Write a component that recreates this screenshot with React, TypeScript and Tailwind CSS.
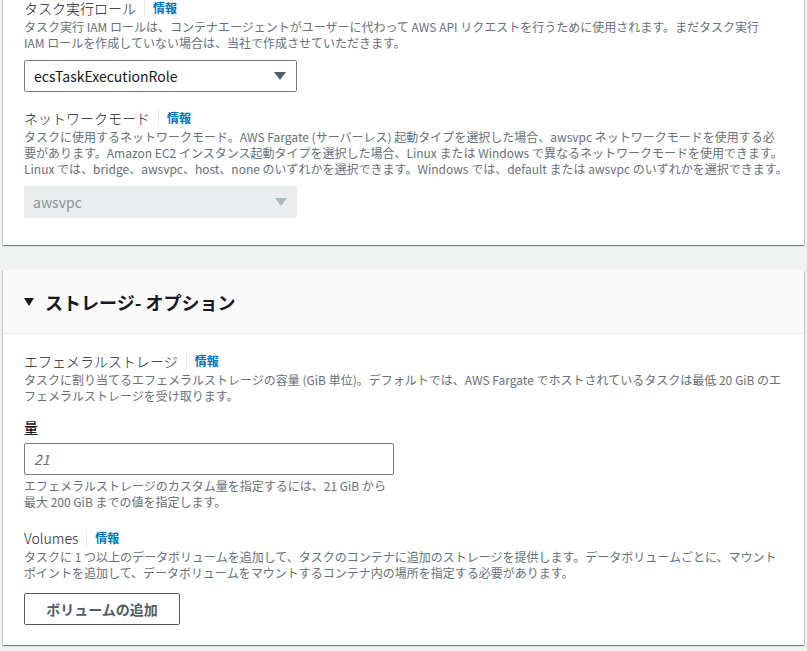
const font = { fontFamily: '"Noto Sans CJK JP", "Noto Sans", sans-serif' };

const Label = ({ text, info = true }: { text: string; info?: boolean }) => (
  <div className="flex h-[22px] items-center text-[14px] font-light leading-[20px] text-[#16191f]">
    <span>{text}</span>
    {info && (
      <>
        <span className="mx-[8px] h-[18px] w-px bg-[#eaeded]" />
        <a className="text-[12px] font-bold text-[#0073bb]">情報</a>
      </>
    )}
  </div>
);

const Desc = ({ children }: { children: React.ReactNode }) => (
  <p className="whitespace-nowrap text-[12px] leading-[16px] text-[#687078]">{children}</p>
);

const Caret = ({ color, w = 12 }: { color: string; w?: number }) => (
  <svg width={w} height="10" viewBox="0 0 12 10" preserveAspectRatio="none">
    <path d="M0 1h12L6 9z" fill={color} />
  </svg>
);

const App = () => {
  return (
    <div className="min-h-screen bg-[#f2f3f3] pb-[6px]" style={font}>
      {/* タスクロール パネル（上部は切れている） */}
      <div className="mx-[3px] bg-white px-[21px] pb-[27px] shadow-[0_1px_1px_0_rgba(0,28,36,0.3),1px_1px_1px_0_rgba(0,28,36,0.15),-1px_1px_1px_0_rgba(0,28,36,0.15)]">
        <div className="-mt-[3px]">
          <Label text="タスク実行ロール" />
        </div>
        <Desc>
          タスク実行 IAM ロールは、コンテナエージェントがユーザーに代わって AWS API リクエストを行うために使用されます。まだタスク実行
          <br />
          IAM ロールを作成していない場合は、当社で作成させていただきます。
        </Desc>
        <div className="mt-[9px] flex h-[32px] w-[273px] items-center justify-between rounded-[2px] border border-[#777d84] pl-[9px] pr-[10px] text-[14px] text-[#16191f]">
          <span>ecsTaskExecutionRole</span>
          <Caret color="#545b64" />
        </div>

        <div className="mt-[15px]">
          <Label text="ネットワークモード" />
        </div>
        <Desc>
          タスクに使用するネットワークモード。AWS Fargate (サーバーレス) 起動タイプを選択した場合、awsvpc ネットワークモードを使用する必
          <br />
          要があります。Amazon EC2 インスタンス起動タイプを選択した場合、Linux または Windows で異なるネットワークモードを使用できます。
          <br />
          Linux では、bridge、awsvpc、host、none のいずれかを選択できます。Windows では、default または awsvpc のいずれかを選択できます。
        </Desc>
        <div className="mt-[9px] flex h-[32px] w-[273px] items-center justify-between rounded-[2px] bg-[#eaeded] pl-[9px] pr-[10px] text-[14px] text-[#879596]">
          <span>awsvpc</span>
          <Caret color="#aab7b8" />
        </div>
      </div>

      {/* ストレージ オプション */}
      <div className="mx-[3px] mt-[25px] bg-white shadow-[0_1px_1px_0_rgba(0,28,36,0.3),1px_1px_1px_0_rgba(0,28,36,0.15),-1px_1px_1px_0_rgba(0,28,36,0.15)]">
        <div className="flex h-[64px] items-center gap-[11px] border-b border-[#eaeded] bg-[#fafafa] px-[21px]">
          <Caret color="#16191f" w={10} />
          <h2 className="text-[18px] font-bold leading-[24px] text-[#16191f]">ストレージ- オプション</h2>
        </div>
        <div className="px-[21px] pb-[20px] pt-[16px]">
          <Label text="エフェメラルストレージ" />
          <Desc>
            タスクに割り当てるエフェメラルストレージの容量 (GiB 単位)。デフォルトでは、AWS Fargate でホストされているタスクは最低 20 GiB のエ
            <br />
            フェメラルストレージを受け取ります。
          </Desc>

          <div className="mt-[13px] text-[14px] font-medium leading-[20px] text-[#16191f]">量</div>
          <div className="mt-[6px] flex h-[32px] w-[370px] items-center rounded-[2px] border border-[#777d84] px-[9px] text-[14px] italic text-[#687078]">
            21
          </div>
          <div className="mt-[3px]">
            <Desc>
              エフェメラルストレージのカスタム量を指定するには、21 GiB から
              <br />
              最大 200 GiB までの値を指定します。
            </Desc>
          </div>

          <div className="mt-[17px]">
            <Label text="Volumes" />
          </div>
          <Desc>
            タスクに 1 つ以上のデータボリュームを追加して、タスクのコンテナに追加のストレージを提供します。データボリュームごとに、マウント
            <br />
            ポイントを追加して、データボリュームをマウントするコンテナ内の場所を指定する必要があります。
          </Desc>
          <button className="mt-[12px] flex h-[32px] w-[156px] items-center justify-center rounded-[2px] border border-[#545b64] bg-white text-[14px] font-bold text-[#545b64]">
            ボリュームの追加
          </button>
        </div>
      </div>
    </div>
  );
};

export default App;
